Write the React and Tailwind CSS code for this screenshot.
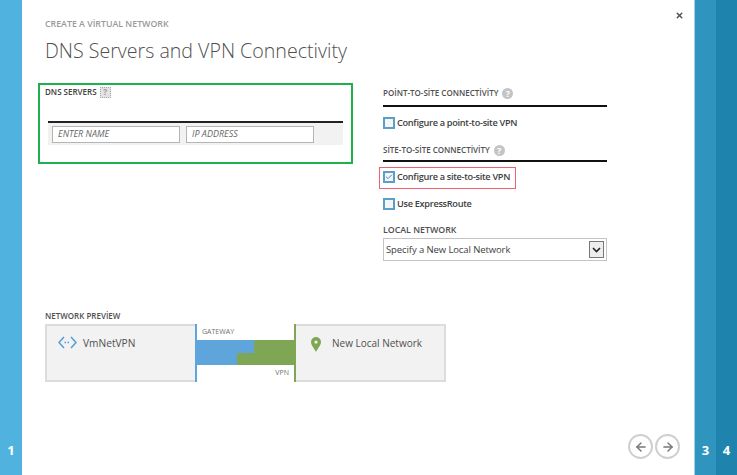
import React from 'react';
import { ArrowLeft, ArrowRight, X, Check } from 'lucide-react';

const HelpDot = () => (
  <span className="ml-[4px] inline-flex h-[11px] w-[11px] items-center justify-center rounded-full bg-[#c4c4c4] text-[9px] font-bold leading-none text-white">?</span>
);

const CheckRow = ({ label, checked }) => (
  <div className="flex h-[16px] items-center text-[9.2px] font-semibold tracking-[-0.3px] text-[#404040]">
    <span className="flex h-[12px] w-[12px] items-center justify-center border-2 border-[#5a9fc9] bg-[#f5f5f5]">
      {checked && <Check size={10} strokeWidth={3} className="text-[#3d8fc4]" />}
    </span>
    <span className="ml-[2px]">{label}</span>
  </div>
);

const SectionHead = ({ label }) => (
  <div className="flex h-[14px] items-center text-[8px] font-semibold text-[#505050]">
    {label}
    <HelpDot />
  </div>
);

const App = () => {
  return (
    <div className="flex h-[475px] w-[737px] overflow-hidden bg-white font-['Open_Sans',sans-serif]">
      <div className="flex w-[22px] items-end justify-center bg-[#50b3df] pb-[18px] text-[13px] font-bold leading-none text-white">1</div>

      <div className="relative flex flex-1 flex-col pl-[16px]">
        <button className="absolute right-[10px] top-[11px] text-[#505050]">
          <X size={9} strokeWidth={4} />
        </button>

        <div className="pl-[7px] pt-[18px]">
          <div className="text-[8.8px] font-semibold leading-[13px] text-[#9a9a9a]">CREATE A VİRTUAL NETWORK</div>
          <h1 className="mt-[5px] text-[19.6px] font-light leading-[30px] text-[#505050]">DNS Servers and VPN Connectivity</h1>
        </div>

        <div className="mt-[17px] flex items-start">
          <div className="h-[81px] w-[315px] border-2 border-[#1faf4b] pl-[5px]">
            <div className="flex h-[14px] items-center text-[8px] font-semibold text-[#404040]">
              DNS SERVERS
              <span className="ml-[3px] flex h-[11px] w-[11px] items-center justify-center border border-dotted border-[#aaa] bg-[#e2e2e2] text-[8px] font-bold leading-none text-[#999]">?</span>
            </div>
            <div className="ml-[3px] mt-[22px] flex h-[24px] w-[295px] items-center gap-[6px] border-t-2 border-[#222] bg-[#f2f2f2] pl-[4px]">
              <div className="flex h-[17px] w-[128px] items-center border border-[#b5b5b5] bg-white pl-[5px] text-[9px] italic text-[#666]">ENTER NAME</div>
              <div className="flex h-[17px] w-[128px] items-center border border-[#b5b5b5] bg-white pl-[5px] text-[9px] italic text-[#666]">IP ADDRESS</div>
            </div>
          </div>

          <div className="ml-[30px] w-[224px] pt-[3px]">
            <SectionHead label="POİNT-TO-SİTE CONNECTİVİTY" />
            <div className="mt-[5px] h-[2px] bg-[#111]" />
            <div className="mt-[8px]"><CheckRow label="Configure a point-to-site VPN" /></div>
            <div className="mt-[12px]"><SectionHead label="SİTE-TO-SİTE CONNECTİVİTY" /></div>
            <div className="mt-[3px] h-[2px] bg-[#111]" />
            <div className="relative mt-[7px]">
              <CheckRow label="Configure a site-to-site VPN" checked />
              <div className="absolute -left-[4px] -top-[2px] h-[22px] w-[137px] border border-[#f0606e]" />
            </div>
            <div className="mt-[11px]"><CheckRow label="Use ExpressRoute" /></div>
            <div className="mt-[12px] text-[8.8px] font-semibold leading-[13px] text-[#505050]">LOCAL NETWORK</div>
            <div className="mt-[1px] flex h-[23px] items-center justify-between border border-[#c4c4c4] pl-[2px] pr-[2px] text-[9.5px] tracking-[-0.1px] text-[#404040]">
              <span className="mt-[2px]">Specify a New Local Network</span>
              <span className="flex h-[17px] w-[15px] items-center justify-center border border-[#777] bg-[#eee]">
                <svg width="9" height="6" viewBox="0 0 9 6"><path d="M1 1l3.5 3.5L8 1" fill="none" stroke="#222" strokeWidth="1.6" /></svg>
              </span>
            </div>
          </div>
        </div>

        <div className="pl-[7px] pt-[48px]">
          <div className="text-[8px] font-semibold leading-[13px] text-[#505050]">NETWORK PREVİEW</div>
          <div className="mt-[2px] flex h-[58px] w-[401px]">
            <div className="flex w-[150px] items-start gap-[6px] border-2 border-r-0 border-[#dcdcdc] bg-[#f2f2f2] pl-[11px] pt-[10px]">
              <svg width="19" height="13" viewBox="0 0 19 13">
                <path d="M6 1L1 6.5L6 12M13 1l5 5.5L13 12" fill="none" stroke="#4f9fdc" strokeWidth="1.5" />
                <path d="M6.5 6.5h6" stroke="#4f9fdc" strokeWidth="1.5" strokeDasharray="1.5 1.5" />
              </svg>
              <span className="text-[10.2px] leading-[15px] text-[#505050]">VmNetVPN</span>
            </div>
            <div className="flex w-[101px] flex-col border-x-2 border-l-[#5ea5dc] border-r-[#7ea654]">
              <div className="h-[16px] pl-[5px] text-[7px] leading-[16px] text-[#707070]">GATEWAY</div>
              <div className="flex h-[13px]">
                <div className="w-[57px] bg-[#5ea5dc]" />
                <div className="flex-1 bg-[#7ea654]" />
              </div>
              <div className="flex h-[12px]">
                <div className="w-[40px] bg-[#5ea5dc]" />
                <div className="flex-1 bg-[#7ea654]" />
              </div>
              <div className="pr-[5px] text-right text-[7px] leading-[15px] text-[#707070]">VPN</div>
            </div>
            <div className="flex flex-1 items-start border-2 border-l-0 border-[#dcdcdc] bg-[#f2f2f2] pl-[15px] pt-[10px]">
              <svg width="10" height="15" viewBox="0 0 10 15" className="mt-[1px]">
                <path fillRule="evenodd" d="M5 0a5 5 0 0 1 5 5c0 3-3 6-5 10C3 11 0 8 0 5a5 5 0 0 1 5-5zm0 3.5a1.6 1.6 0 1 0 0 3.2a1.6 1.6 0 0 0 0-3.2z" fill="#7ea654" />
              </svg>
              <span className="ml-[11px] text-[10px] leading-[15px] text-[#505050]">New Local Network</span>
            </div>
          </div>
        </div>

        <div className="mt-auto flex justify-end gap-[2px] pb-[16px] pr-[14px]">
          <span className="flex h-[25px] w-[25px] items-center justify-center rounded-full border-2 border-[#cfcfcf] text-[#777]"><ArrowLeft size={14} strokeWidth={2.5} /></span>
          <span className="flex h-[25px] w-[25px] items-center justify-center rounded-full border-2 border-[#cfcfcf] text-[#777]"><ArrowRight size={14} strokeWidth={2.5} /></span>
        </div>
      </div>

      <div className="flex w-[22px] items-end justify-center border-l border-[#9fd0e4] bg-[#2f95bf] pb-[18px] text-[13px] font-bold leading-none text-white">3</div>
      <div className="flex w-[21px] items-end justify-center bg-[#1f84ad] pb-[18px] text-[13px] font-bold leading-none text-white">4</div>
    </div>
  );
};

export default App;
